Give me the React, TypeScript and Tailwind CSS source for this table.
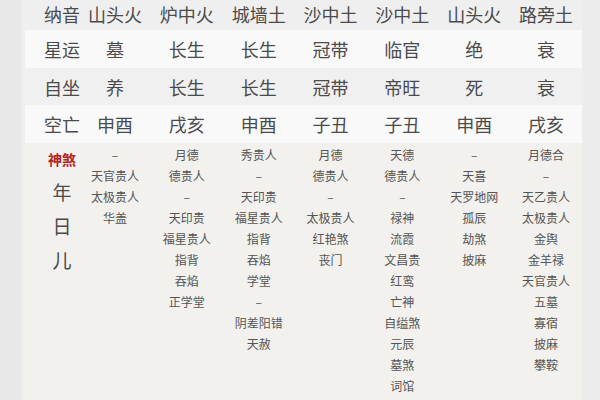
const pillars = [
  { nayin: "山头火", xingyun: "墓", zizuo: "养", kongwang: "申酉" },
  { nayin: "炉中火", xingyun: "长生", zizuo: "长生", kongwang: "戌亥" },
  { nayin: "城墙土", xingyun: "长生", zizuo: "长生", kongwang: "申酉" },
  { nayin: "沙中土", xingyun: "冠带", zizuo: "冠带", kongwang: "子丑" },
  { nayin: "沙中土", xingyun: "临官", zizuo: "帝旺", kongwang: "子丑" },
  { nayin: "山头火", xingyun: "绝", zizuo: "死", kongwang: "申酉" },
  { nayin: "路旁土", xingyun: "衰", zizuo: "衰", kongwang: "戌亥" },
];

const shensha: string[][] = [
  ["–", "天官贵人", "太极贵人", "华盖"],
  ["月德", "德贵人", "–", "天印贵", "福星贵人", "指背", "吞焰", "正学堂"],
  ["秀贵人", "–", "天印贵", "福星贵人", "指背", "吞焰", "学堂", "–", "阴差阳错", "天赦"],
  ["月德", "德贵人", "–", "太极贵人", "红艳煞", "丧门"],
  ["天德", "德贵人", "–", "禄神", "流霞", "文昌贵", "红鸾", "亡神", "自缢煞", "元辰", "墓煞", "词馆"],
  ["–", "天喜", "天罗地网", "孤辰", "劫煞", "披麻"],
  ["月德合", "–", "天乙贵人", "太极贵人", "金舆", "金羊禄", "天官贵人", "五墓", "寡宿", "披麻", "攀鞍"],
];

const rows: { label: string; key: "nayin" | "xingyun" | "zizuo" | "kongwang"; bg: string; h: string }[] = [
  { label: "纳音", key: "nayin", bg: "bg-[#efefef]", h: "h-[30px]" },
  { label: "星运", key: "xingyun", bg: "bg-[#f9f9f9]", h: "h-[38px]" },
  { label: "自坐", key: "zizuo", bg: "bg-[#f0f0f0]", h: "h-[37px]" },
  { label: "空亡", key: "kongwang", bg: "bg-[#f9f9f9]", h: "h-[38px]" },
];

export default function App() {
  return (
    <div
      className="w-[600px] h-[400px] overflow-hidden flex bg-[#e9e9e9]"
      style={{ fontFamily: '"Noto Sans CJK SC", "Noto Sans", sans-serif' }}
    >
      {/* left blurred edge */}
      <div className="w-[25px] shrink-0 bg-[#e8e8e8] border-r-[4px] border-[#efefef]" />

      {/* table */}
      <div className="w-[557px] shrink-0 flex flex-col">
        {rows.map((row, r) => (
          <div
            key={row.key}
            className={`flex ${row.h} ${r === 0 ? "items-start pt-[4px]" : "items-center"} ${row.bg}`}
          >
            <div className="w-[54px] shrink-0 pl-[18px]">
              <div className="w-[38px] text-[18px] leading-[20px] text-[#4b4b4b] text-center">
                {row.label}
              </div>
            </div>
            {pillars.map((p, i) => (
              <div
                key={i}
                className="flex-1 text-center text-[18px] leading-[20px] text-[#4b4b4b]"
              >
                {p[row.key]}
              </div>
            ))}
          </div>
        ))}

        {/* 神煞 */}
        <div className="flex flex-1 bg-[#f2f1ee] pt-[1px]">
          <div className="w-[54px] shrink-0 pl-[18px]">
            <div className="w-[38px] flex flex-col items-center">
              <div className="text-[14px] leading-[20px] font-bold text-[#b3241c] mt-[5px]">
                神煞
              </div>
              <div className="text-[19px] leading-[34px] text-[#4b4b4b] mt-[6px]">年</div>
              <div className="text-[19px] leading-[34px] text-[#4b4b4b]">日</div>
              <div className="text-[19px] leading-[34px] text-[#4b4b4b]">儿</div>
            </div>
          </div>
          {shensha.map((col, i) => (
            <div key={i} className="flex-1 flex flex-col items-center">
              {col.map((s, j) => (
                <div key={j} className="text-[12px] leading-[21px] text-[#555555]">
                  {s}
                </div>
              ))}
            </div>
          ))}
        </div>
      </div>

      {/* right edge */}
      <div className="flex-1 bg-[#ececec]" />
    </div>
  );
}
